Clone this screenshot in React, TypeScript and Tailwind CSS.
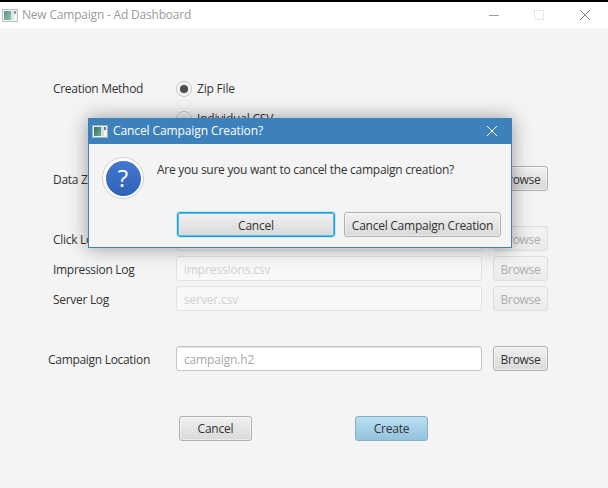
import React from "react";

const font = "[font-family:'Open_Sans','Noto_Sans',sans-serif]";

function AppIcon({ id, dim }: { id: string; dim?: boolean }) {
  return (
    <svg width="16" height="13" viewBox="0 0 16 13" className={`shrink-0 ${dim ? "opacity-75" : ""}`}>
      <defs>
        <linearGradient id={id} x1="0" y1="0" x2="1" y2="1">
          <stop offset="0" stopColor="#2f6d78" />
          <stop offset="1" stopColor="#6fae84" />
        </linearGradient>
      </defs>
      <rect x="0.5" y="0.5" width="15" height="12" fill="#e9eef0" stroke="#a6afb3" />
      <rect x="2" y="2" width="7" height="9" fill={`url(#${id})`} />
      <rect x="9" y="2" width="3" height="9" fill="#d5dde0" />
      <rect x="12" y="2" width="2" height="3" fill="#6a7a82" />
      <rect x="12" y="5" width="2" height="6" fill="#f4f6f7" />
    </svg>
  );
}

const btn =
  "h-[25px] rounded-[3px] border border-[#b0b0b0] bg-gradient-to-b from-[#f1f1f1] to-[#d9d9d9] text-[12px] text-[#333] shadow-[inset_0_0_0_1px_rgba(255,255,255,0.45)] flex items-center justify-center";
const btnOff =
  "h-[25px] w-[55px] shrink-0 rounded-[3px] border border-[#dddddd] bg-gradient-to-b from-[#f3f3f3] to-[#ebebeb] text-[12px] text-[#adadad] flex items-center justify-center";

function Row({
  label,
  placeholder,
  disabled,
  wide,
  className,
}: {
  label: string;
  placeholder: string;
  disabled?: boolean;
  wide?: boolean;
  className?: string;
}) {
  return (
    <div className={`flex items-center h-[25px] ${className ?? ""}`}>
      <div className={`w-[176px] shrink-0 pt-[2px] text-[12px] text-[#333] tracking-[-0.3px] ${wide ? "pl-[48px]" : "pl-[53px]"}`}>
        {label}
      </div>
      <div
        className={`w-[306px] h-[25px] shrink-0 rounded-[3px] border px-[7px] pt-[2px] flex items-center text-[12px] tracking-[-0.15px] ${
          disabled
            ? "border-[#e2e2e2] bg-[#f8f8f8] text-[#d0d0d0]"
            : "border-[#c4c4c4] bg-white text-[#a9a9a9] shadow-[inset_0_1px_0_#e6e6e6]"
        }`}
      >
        {placeholder}
      </div>
      {disabled ? (
        <div className={`${btnOff} ml-[11px] pt-[2px] tracking-[-0.3px]`}>Browse</div>
      ) : (
        <div className={`${btn} w-[55px] shrink-0 ml-[11px] pt-[2px] tracking-[-0.3px]`}>Browse</div>
      )}
    </div>
  );
}

function Radio({ on }: { on?: boolean }) {
  return (
    <span className="w-[16px] h-[16px] rounded-full border border-[#c6c6c6] bg-gradient-to-b from-[#f4f4f4] to-[#e6e6e6] flex items-center justify-center shrink-0 shadow-[inset_0_0_0_1px_#fff]">
      {on && <span className="w-[8px] h-[8px] rounded-full bg-[#4d4d4d]" />}
    </span>
  );
}

export default function App() {
  return (
    <div className={`relative w-[608px] h-[488px] overflow-hidden bg-[#f4f4f4] ${font}`}>
      <div className="h-[2px] bg-black" />
      <div className="h-[26px] bg-white flex items-center pl-[2px]">
        <AppIcon id="a" dim />
        <span className="ml-[4px] text-[12px] tracking-[-0.2px] text-[#9b9b9b]">New Campaign - Ad Dashboard</span>
        <div className="ml-auto flex items-center">
          <div className="w-[10px] h-px bg-[#a0a0a0] mr-[35px]" />
          <div className="w-[10px] h-[10px] border border-[#e6e6e6] mr-[36px]" />
          <svg width="10" height="10" viewBox="0 0 10 10" className="mr-[18px]">
            <path d="M0 0L10 10M10 0L0 10" stroke="#8a8a8a" strokeWidth="1" fill="none" />
          </svg>
        </div>
      </div>

      <div className="flex items-center h-[26px] mt-[48px]">
        <div className="w-[176px] pl-[53px] text-[12px] text-[#333] tracking-[-0.3px]">Creation Method</div>
        <div className="flex items-center gap-[5px] text-[12px] text-[#333] tracking-[-0.2px]">
          <Radio on />
          Zip File
        </div>
      </div>
      <div className="flex items-center h-[26px] mt-[4px] pl-[176px] gap-[5px] text-[12px] text-[#333] tracking-[-0.2px]">
        <Radio />
        Individual CSV
      </div>

      <Row label="Data Zip" placeholder="" className="mt-[34px]" />
      <Row label="Click Log" placeholder="clicks.csv" disabled className="mt-[35px]" />
      <Row label="Impression Log" placeholder="impressions.csv" disabled className="mt-[5px]" />
      <Row label="Server Log" placeholder="server.csv" disabled className="mt-[5px]" />
      <Row label="Campaign Location" placeholder="campaign.h2" wide className="mt-[35px]" />

      <div className="flex mt-[45px] pl-[179px] gap-[103px]">
        <div className={`${btn} w-[73px] tracking-[-0.2px]`}>Cancel</div>
        <div className="h-[25px] w-[73px] rounded-[3px] border border-[#86b0c4] bg-gradient-to-b from-[#b9dff2] to-[#93c3dc] text-[12px] text-[#333] tracking-[-0.2px] flex items-center justify-center">
          Create
        </div>
      </div>

      {/* dialog */}
      <div className="absolute left-[88px] top-[118px] w-[424px] h-[130px] border border-[#3c81bc] border-t-0 bg-[#f4f4f4] shadow-[0_0_18px_rgba(0,0,0,0.38)]">
        <div className="h-[26px] -mx-px bg-[#3d81bc] flex items-center pl-[4px] pr-[15px]">
          <AppIcon id="b" />
          <span className="ml-[5px] text-[12px] tracking-[-0.1px] text-white">Cancel Campaign Creation?</span>
          <svg width="10" height="10" viewBox="0 0 10 10" className="ml-auto">
            <path d="M0 0L10 10M10 0L0 10" stroke="#fff" strokeWidth="1" fill="none" />
          </svg>
        </div>
        <div className="flex items-start pl-[13px] pt-[13px]">
          <div className="w-[42px] h-[42px] rounded-full bg-white border border-[#d2d2d2] flex items-center justify-center shrink-0">
            <div className="w-[35px] h-[35px] rounded-full bg-gradient-to-b from-[#4279d0] to-[#2f62b6] flex items-center justify-center text-white text-[24px] leading-none">
              ?
            </div>
          </div>
          <div className="ml-[13px] text-[12px] text-[#333] leading-[25px] tracking-[-0.27px] whitespace-nowrap">
            Are you sure you want to cancel the campaign creation?
          </div>
        </div>
        <div className="flex pl-[88px] gap-[9px] mt-[13px]">
          <div className="h-[25px] w-[158px] pt-[2px] rounded-[3px] border border-[#12a0d8] bg-gradient-to-b from-[#f1f1f1] to-[#d9d9d9] shadow-[inset_0_0_0_1px_#5cbde6,0_0_0_1px_#cde8f4] text-[12px] text-[#333] tracking-[-0.2px] flex items-center justify-center">
            Cancel
          </div>
          <div className={`${btn} w-[157px] pt-[2px] tracking-[-0.25px]`}>Cancel Campaign Creation</div>
        </div>
      </div>
    </div>
  );
}
